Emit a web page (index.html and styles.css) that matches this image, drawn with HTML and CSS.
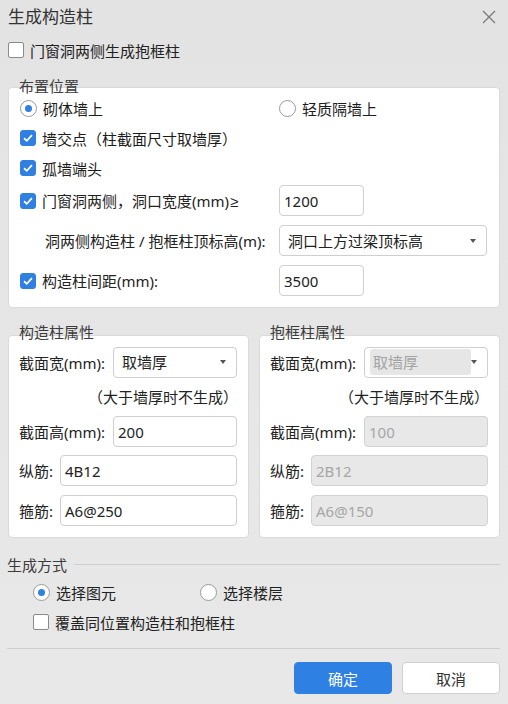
FILE: index.html
```html
<!DOCTYPE html>
<html lang="zh-CN">
<head>
<meta charset="utf-8">
<title>生成构造柱</title>
<link rel="stylesheet" href="styles.css">
</head>
<body>
<div class="dialog">
  <div class="titlebar">
    <span class="title">生成构造柱</span>
    <svg class="close" width="14" height="14" viewBox="0 0 14 14"><path d="M1 1 L13 13 M13 1 L1 13" stroke="#7a7a7a" stroke-width="1.3" fill="none"/></svg>
  </div>

  <div class="row top-check"><span class="cb"></span><span>门窗洞两侧生成抱框柱</span></div>

  <section class="group g-place">
    <div class="legend">布置位置</div>
    <div class="box box-place">
      <div class="line chk split">
        <span class="cell-l"><span class="rb on"></span><span class="strong">砌体墙上</span></span>
        <span class="opt"><span class="rb"></span><span class="strong">轻质隔墙上</span></span>
      </div>
      <div class="line chk"><span class="cb on"><svg viewBox="0 0 16 16"><path d="M3.5 8.3 L6.6 11.2 L12.5 4.8" stroke="#fff" stroke-width="2" fill="none"/></svg></span><span class="strong">墙交点（柱截面尺寸取墙厚）</span></div>
      <div class="line chk"><span class="cb on"><svg viewBox="0 0 16 16"><path d="M3.5 8.3 L6.6 11.2 L12.5 4.8" stroke="#fff" stroke-width="2" fill="none"/></svg></span><span class="strong">孤墙端头</span></div>
      <div class="line fld first">
        <span class="cell-l"><span class="cb on"><svg viewBox="0 0 16 16"><path d="M3.5 8.3 L6.6 11.2 L12.5 4.8" stroke="#fff" stroke-width="2" fill="none"/></svg></span><span>门窗洞两侧，洞口宽度(mm)<span class="ge">≥</span></span></span>
        <span class="input w-short">1200</span>
      </div>
      <div class="line fld">
        <span class="cell-l indent">洞两侧构造柱 / 抱框柱顶标高(m):</span>
        <span class="select w-long"><span class="val">洞口上方过梁顶标高</span><span class="arrow"></span></span>
      </div>
      <div class="line fld">
        <span class="cell-l"><span class="cb on"><svg viewBox="0 0 16 16"><path d="M3.5 8.3 L6.6 11.2 L12.5 4.8" stroke="#fff" stroke-width="2" fill="none"/></svg></span><span>构造柱间距(mm):</span></span>
        <span class="input w-short">3500</span>
      </div>
    </div>
  </section>

  <div class="pair">
    <section class="group g-prop">
      <div class="legend">构造柱属性</div>
      <div class="box box-prop">
        <div class="line fld first"><span class="lab-w">截面宽(mm):</span><span class="select grow"><span class="val">取墙厚</span><span class="arrow"></span></span></div>
        <div class="note">（大于墙厚时不生成）</div>
        <div class="line fld tight"><span class="lab-w">截面高(mm):</span><span class="input grow">200</span></div>
        <div class="line fld gap8"><span class="lab-n">纵筋:</span><span class="input grow">4B12</span></div>
        <div class="line fld"><span class="lab-n">箍筋:</span><span class="input grow">A6@250</span></div>
      </div>
    </section>
    <section class="group g-prop">
      <div class="legend">抱框柱属性</div>
      <div class="box box-prop">
        <div class="line fld first"><span class="lab-w">截面宽(mm):</span><span class="select grow disabled"><span class="val">取墙厚</span><span class="arrow"></span></span></div>
        <div class="note">（大于墙厚时不生成）</div>
        <div class="line fld tight"><span class="lab-w">截面高(mm):</span><span class="input grow disabled">100</span></div>
        <div class="line fld gap8"><span class="lab-n">纵筋:</span><span class="input grow disabled">2B12</span></div>
        <div class="line fld"><span class="lab-n">箍筋:</span><span class="input grow disabled">A6@150</span></div>
      </div>
    </section>
  </div>

  <div class="sect-head"><span>生成方式</span><span class="rule"></span></div>
  <div class="line gen split first-gen">
    <span class="gen-l"><span class="rb on"></span><span>选择图元</span></span>
    <span class="opt"><span class="rb"></span><span>选择楼层</span></span>
  </div>
  <div class="line gen"><span class="cb"></span><span>覆盖同位置构造柱和抱框柱</span></div>

  <div class="sep"></div>

  <div class="buttons">
    <span class="btn primary">确定</span>
    <span class="btn">取消</span>
  </div>
</div>
</body>
</html>
```

FILE: styles.css
```css
* { box-sizing: border-box; }
html, body { margin: 0; padding: 0; }
body {
  width: 508px;
  height: 704px;
  overflow: hidden;
  background: linear-gradient(180deg, #e3e3e3 0%, #e6e6e6 50%, #e8e8e8 100%);
  font-family: "Noto Sans", "Noto Sans CJK SC", sans-serif;
  font-size: 15px;
  color: #222;
}
.dialog { padding: 0 8px; }

.titlebar {
  height: 34px;
  display: flex;
  align-items: center;
  justify-content: space-between;
}
.title { font-size: 17px; line-height: 20px; color: #333; }
.close { margin-right: 4px; }

.row, .line { display: flex; align-items: center; }
.top-check { height: 32px; gap: 6px; }

/* checkbox & radio */
.cb {
  width: 16px; height: 16px;
  border: 1px solid #8a8a8a;
  border-radius: 2px;
  background: #fff;
  flex: none;
  display: inline-flex;
}
.cb.on { background: #2f80e0; border-color: #2f80e0; border-radius: 3px; }
.cb svg { width: 14px; height: 14px; }
.rb {
  width: 17px; height: 17px;
  border: 1px solid #9a9a9a;
  border-radius: 50%;
  background: #fff;
  flex: none;
  display: inline-flex;
  align-items: center;
  justify-content: center;
}
.rb.on::after {
  content: "";
  width: 7px; height: 7px;
  border-radius: 50%;
  background: #2f80e0;
}
.ge { font-family: "Liberation Sans", sans-serif; margin-left: 1px; }

/* group boxes */
.group { margin-top: 12px; }
.legend {
  position: relative;
  z-index: 1;
  line-height: 16px;
  height: 16px;
  padding-left: 11px;
  color: #3c3c3c;
  margin-bottom: -7px;
}
.box {
  background: #fff;
  border: 1px solid #dadada;
  border-radius: 4px;
}
.box-place { padding: 5px 11px 11px 11px; }
.line.chk { height: 30px; gap: 6px; }
.line.split { gap: 0; }
.cell-l { width: 259px; flex: none; display: flex; align-items: center; gap: 6px; }
.cell-l.indent { padding-left: 25px; }
.opt { display: flex; align-items: center; gap: 6px; }
.strong { color: #1c1c1c; }
.line.fld { height: 31px; margin-top: 9px; }
.line.fld.first { margin-top: 2px; }

.input, .select {
  height: 31px;
  border: 1px solid #cfcfcf;
  border-radius: 4px;
  background: #fff;
  display: flex;
  align-items: center;
  padding-left: 4px;
  color: #222;
  line-height: 20px;
}
.w-short { width: 85px; }
.w-long { width: 208px; }
.select { padding-left: 8px; padding-right: 10px; justify-content: space-between; }
.arrow {
  width: 0; height: 0;
  border-left: 3px solid transparent;
  border-right: 3px solid transparent;
  border-top: 4px solid #555;
}

.pair { display: flex; gap: 10px; margin-top: 16px; }
.pair .group { margin-top: 0; width: 241px; flex: none; }
.pair .legend { padding-left: 11px; margin-bottom: -5px; }
.box-prop { padding: 10px 11px 11px 10px; }
.box-prop .line.fld.first { margin-top: 0; height: 32px; }
.lab-w { width: 94px; flex: none; }
.lab-n { width: 41px; flex: none; }
.grow { flex: 1; min-width: 0; }
.note { height: 38px; display: flex; align-items: center; padding-left: 69px; line-height: 20px; }
.line.fld.tight { margin-top: 0; }
.line.fld.gap8 { margin-top: 8px; }

.select.disabled { padding-left: 5px; }
.select.disabled .val {
  background: #e6e6e6;
  color: #a3a3a3;
  border-radius: 3px;
  height: 26px;
  width: 101px;
  padding-left: 3px;
  display: flex;
  align-items: center;
}
.input.disabled { background: #e8e8e8; border-color: #d2d2d2; color: #a6a6a6; }

/* generation mode */
.sect-head {
  display: flex;
  align-items: center;
  height: 20px;
  margin-top: 16px;
  margin-left: -1px;
  gap: 7px;
  color: #3c3c3c;
}
.rule { flex: 1; height: 1px; background: #cfcfcf; }
.line.gen { height: 30px; padding-left: 25px; gap: 6px; }
.line.gen.split { gap: 0; }
.line.gen.first-gen { margin-top: 3px; }
.gen-l { width: 167px; flex: none; display: flex; align-items: center; gap: 6px; }
.sep { height: 1px; background: #cfcfcf; margin-top: 11px; margin-left: -1px; }

.buttons { display: flex; justify-content: flex-end; gap: 10px; margin-top: 13px; }
.btn {
  width: 98px; height: 32px;
  border-radius: 4px;
  display: flex; align-items: center; justify-content: center;
  background: #fff;
  border: 1px solid #d0d0d0;
  color: #333;
  font-size: 15px;
}
.btn.primary { background: #2e80e2; border-color: #2e80e2; color: #fff; }
```
